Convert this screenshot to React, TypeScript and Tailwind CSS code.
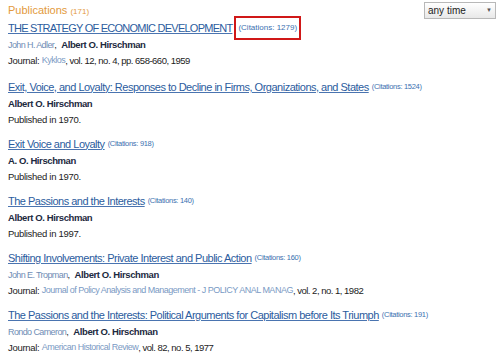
type Pub = {
	title: string;
	cites: string;
	authors: { name: string; main?: boolean }[];
	journal?: { name: string; rest: string };
	year?: string;
	boxed?: boolean;
};

const pubs: Pub[] = [
	{
		title: "THE STRATEGY OF ECONOMIC DEVELOPMENT",
		cites: "1279",
		authors: [{ name: "John H. Adler" }, { name: "Albert O. Hirschman", main: true }],
		journal: { name: "Kyklos", rest: ", vol. 12, no. 4, pp. 658-660, 1959" },
		boxed: true,
	},
	{
		title: "Exit, Voice, and Loyalty: Responses to Decline in Firms, Organizations, and States",
		cites: "1524",
		authors: [{ name: "Albert O. Hirschman", main: true }],
		year: "1970",
	},
	{
		title: "Exit Voice and Loyalty",
		cites: "918",
		authors: [{ name: "A. O. Hirschman", main: true }],
		year: "1970",
	},
	{
		title: "The Passions and the Interests",
		cites: "140",
		authors: [{ name: "Albert O. Hirschman", main: true }],
		year: "1997",
	},
	{
		title: "Shifting Involvements: Private Interest and Public Action",
		cites: "160",
		authors: [{ name: "John E. Tropman" }, { name: "Albert O. Hirschman", main: true }],
		journal: {
			name: "Journal of Policy Analysis and Management - J POLICY ANAL MANAG",
			rest: ", vol. 2, no. 1, 1982",
		},
	},
	{
		title: "The Passions and the Interests: Political Arguments for Capitalism before Its Triumph",
		cites: "191",
		authors: [{ name: "Rondo Cameron" }, { name: "Albert O. Hirschman", main: true }],
		journal: { name: "American Historical Review", rest: ", vol. 82, no. 5, 1977" },
	},
];

function Entry({ p }: { p: Pub }) {
	return (
		<div className={p.boxed ? "mb-[10px]" : "mb-2"}>
			<div className="h-4 flex items-center whitespace-nowrap">
				<a
					className={
						p.boxed
							? "text-[11px] tracking-[-0.75px] text-[#2b5c9e] underline decoration-[#4a74b0]"
							: "text-[11px] tracking-[-0.5px] text-[#2b5c9e] underline decoration-[#4a74b0]"
					}
				>
					{p.title}
				</a>
				<span
					className={
						p.boxed
							? "ml-[2px] border-2 border-[#d01818] px-[2px] h-[24px] flex items-center text-[8px] text-[#3a70b0]"
							: "ml-[3px] text-[7.5px] tracking-[-0.3px] text-[#3a70b0]"
					}
				>
					(Citations: {p.cites})
				</span>
			</div>
			<div className="h-4 flex items-center text-[9.5px] tracking-[-0.3px] mt-[1px] whitespace-nowrap">
				{p.authors.map((a, i) => (
					<span key={i}>
						{i > 0 && <span className="text-[#222]">,&nbsp;&nbsp;</span>}
						{a.main ? (
							<span className="font-bold tracking-[-0.4px] text-[#1c2940]">{a.name}</span>
						) : (
							<span className="text-[9px] tracking-[-0.6px] text-[#6f8db5]">{a.name}</span>
						)}
					</span>
				))}
			</div>
			<div className="h-4 flex items-center text-[9.5px] tracking-[-0.3px] text-[#222] whitespace-nowrap">
				{p.journal ? (
					<>
						Journal:&nbsp;
						<span className="text-[9px] tracking-[-0.5px] text-[#7a9ac4]">{p.journal.name}</span>
						<span className="tracking-[-0.5px]">{p.journal.rest}</span>
					</>
				) : (
					<>Published in {p.year}.</>
				)}
			</div>
		</div>
	);
}

export default function App() {
	return (
		<div className="w-[500px] h-[360px] overflow-hidden bg-white font-['Liberation_Sans',Arial,sans-serif] px-2">
			<div className="flex justify-between items-center h-[20px] pt-[1px]">
				<div className="text-[11px] text-[#e39a3c]">
					Publications <span className="text-[8px]">(171)</span>
				</div>
				<div className="w-[72px] h-[17px] border border-[#b8b8b8] bg-gradient-to-b from-white to-[#e8e8e8] flex items-center justify-between px-[3px] text-[10px] text-[#222] mr-[-4px]">
					<span>any time</span>
					<span className="text-[6px] text-[#555]">▼</span>
				</div>
			</div>
			<div>
				{pubs.map((p, i) => (
					<Entry key={i} p={p} />
				))}
			</div>
		</div>
	);
}
